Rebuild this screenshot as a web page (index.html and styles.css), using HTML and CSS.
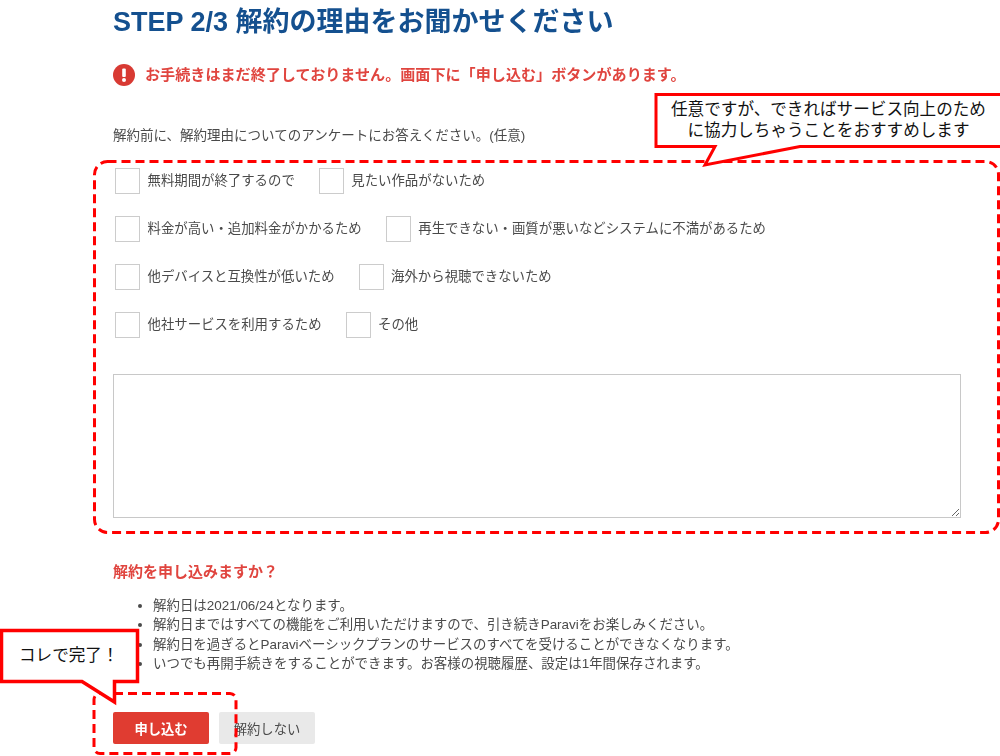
FILE: index.html
```html
<!DOCTYPE html>
<html lang="ja">
<head>
<meta charset="utf-8">
<title>STEP 2/3 解約の理由をお聞かせください</title>
<link rel="stylesheet" href="styles.css">
</head>
<body>
<main class="page">
  <h1 class="title">STEP 2/3 解約の理由をお聞かせください</h1>
  <p class="alert">
    <svg class="alert-icon" viewBox="0 0 22 22" aria-hidden="true"><circle cx="11" cy="11" r="11" fill="#d83a33"/><rect x="9.2" y="4.5" width="3.6" height="8.6" rx="1" fill="#fff"/><circle cx="11" cy="16" r="2" fill="#fff"/></svg>
    <span>お手続きはまだ終了しておりません。画面下に「申し込む」ボタンがあります。</span>
  </p>
  <p class="lead">解約前に、解約理由についてのアンケートにお答えください。(任意)</p>
  <form class="survey">
    <div class="row">
      <label class="opt"><input class="box" type="checkbox">無料期間が終了するので</label>
      <label class="opt"><input class="box" type="checkbox">見たい作品がないため</label>
    </div>
    <div class="row">
      <label class="opt"><input class="box" type="checkbox">料金が高い・追加料金がかかるため</label>
      <label class="opt"><input class="box" type="checkbox">再生できない・画質が悪いなどシステムに不満があるため</label>
    </div>
    <div class="row">
      <label class="opt"><input class="box" type="checkbox">他デバイスと互換性が低いため</label>
      <label class="opt"><input class="box" type="checkbox">海外から視聴できないため</label>
    </div>
    <div class="row">
      <label class="opt"><input class="box" type="checkbox">他社サービスを利用するため</label>
      <label class="opt"><input class="box" type="checkbox">その他</label>
    </div>
    <textarea class="comment"></textarea>
  </form>
  <h2 class="confirm">解約を申し込みますか？</h2>
  <ul class="notes">
    <li>解約日は2021/06/24となります。</li>
    <li>解約日まではすべての機能をご利用いただけますので、引き続きParaviをお楽しみください。</li>
    <li>解約日を過ぎるとParaviベーシックプランのサービスのすべてを受けることができなくなります。</li>
    <li>いつでも再開手続きをすることができます。お客様の視聴履歴、設定は1年間保存されます。</li>
  </ul>
  <div class="actions">
    <button class="btn btn-primary" type="button">申し込む</button>
    <button class="btn btn-muted" type="button">解約しない</button>
  </div>
</main>
<svg class="marks" viewBox="0 0 1000 756" aria-hidden="true">
  <rect class="dash" x="94.500" y="161.500" width="904" height="371" rx="13"/>
  <rect class="dash" x="94" y="693.500" width="142" height="60" rx="6"/>
  <path class="callout" d="M656 94.500H1002V146.500H800L705 165L715 146.500H656Z"/>
  <path class="callout callout-bold" d="M1.500 630.500H137.500V681.500H114.500V702L82 681.500H1.500Z"/>
</svg>
<div class="note note-a">任意ですが、できればサービス向上のため<br>に協力しちゃうことをおすすめします</div>
<div class="note note-b">コレで完了！</div>
</body>
</html>
```
FILE: styles.css
```css
* { box-sizing: border-box; }
html, body { margin: 0; height: 756px; overflow: hidden; background: #fff; }
body {
  position: relative;
  font-family: "Liberation Sans", "Noto Sans CJK JP", sans-serif;
  color: #4a4a4a;
}
.page { padding: 4px 40px 0 113px; filter: blur(0.35px); }
.title {
  margin: 0;
  font-size: 27px;
  line-height: 36px;
  font-weight: 700;
  color: #14508f;
}
.alert {
  display: flex;
  align-items: center;
  gap: 10px;
  margin: 23px 0 0;
  font-size: 15.1px;
  line-height: 24px;
  font-weight: 700;
  color: #e0453f;
}
.alert-icon { width: 22px; height: 22px; flex: none; }
.lead {
  margin: 39px 0 0;
  font-size: 13.5px;
  line-height: 20px;
}
.survey { margin-top: 22px; }
.row {
  display: flex;
  gap: 24px;
  margin-bottom: 22px;
  padding-left: 2px;
}
.opt {
  display: flex;
  align-items: center;
  gap: 7.5px;
  font-size: 13.4px;
  line-height: 20px;
}
.box {
  appearance: none;
  width: 25px;
  height: 26px;
  margin: 0;
  background: #fff;
  border: 1px solid #ccc;
}
.comment {
  display: block;
  width: 848px;
  height: 144px;
  margin-top: 36px;
  background: #fff;
  border: 1px solid #c8c8c8;
  border-radius: 0;
}
.confirm {
  margin: 44px 0 0;
  font-size: 15px;
  line-height: 20px;
  font-weight: 700;
  color: #e0453f;
}
.notes {
  margin: 14px 0 0;
  padding-left: 40px;
  font-size: 13.45px;
  line-height: 19.3px;
}
.actions {
  display: flex;
  gap: 10px;
  margin-top: 39px;
}
.btn {
  width: 96px;
  height: 32px;
  padding: 0;
  border: 0;
  border-radius: 2px;
  font: inherit;
  font-size: 13.3px;
}
.btn-primary { background: #e03c31; color: #fff; font-weight: 700; }
.btn-muted { background: #e9e9e9; color: #4a4a4a; }
.marks { position: absolute; inset: 0; width: 1000px; height: 756px; }
.dash {
  fill: none;
  stroke: #f00;
  stroke-width: 3;
  stroke-dasharray: 9 5;
}
.callout {
  fill: #fff;
  stroke: #f00;
  stroke-width: 3;
}
.callout-bold { stroke-width: 3.5; }
.note {
  position: absolute;
  color: #111;
  font-size: 16.6px;
  line-height: 21px;
  text-align: center;
}
.note-a { left: 657px; right: 0; top: 99px; }
.note-b { left: 19px; top: 645px; }
```
